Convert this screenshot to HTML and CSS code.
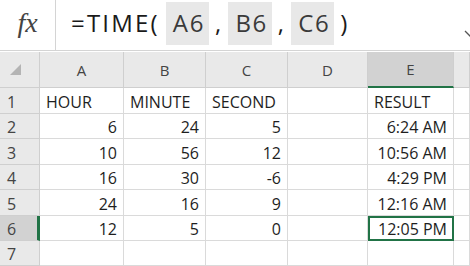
FILE: index.html
```html
<!DOCTYPE html>
<html lang="en">
<head>
    <meta charset="UTF-8">
    <title>TIME function</title>
    <link rel="stylesheet" href="styles.css">
</head>
<body>
    <div class="formula-bar">
        <div class="fx">fx</div>
        <div class="formula">
            <span>=TIME(</span>
            <span class="ref">A6</span>
            <span class="comma">,</span>
            <span class="ref">B6</span>
            <span class="comma">,</span>
            <span class="ref">C6</span>
            <span class="paren">)</span>
        </div>
        <div class="chevron">
            <svg width="12" height="8" viewBox="0 0 12 8"><path d="M1 1 L6 6 L11 1" fill="none" stroke="#555" stroke-width="1.3"/></svg>
        </div>
    </div>

    <div class="sheet">
        <div class="hd corner"><span class="tri"></span></div>
        <div class="hd col">A</div>
        <div class="hd col">B</div>
        <div class="hd col">C</div>
        <div class="hd col">D</div>
        <div class="hd col sel-col">E</div>
        <div class="hd col"></div>

        <div class="hd row">1</div>
        <div class="c">HOUR</div>
        <div class="c">MINUTE</div>
        <div class="c">SECOND</div>
        <div class="c"></div>
        <div class="c">RESULT</div>
        <div class="c"></div>

        <div class="hd row">2</div>
        <div class="c n">6</div>
        <div class="c n">24</div>
        <div class="c n">5</div>
        <div class="c"></div>
        <div class="c n">6:24 AM</div>
        <div class="c"></div>

        <div class="hd row">3</div>
        <div class="c n">10</div>
        <div class="c n">56</div>
        <div class="c n">12</div>
        <div class="c"></div>
        <div class="c n">10:56 AM</div>
        <div class="c"></div>

        <div class="hd row">4</div>
        <div class="c n">16</div>
        <div class="c n">30</div>
        <div class="c n">-6</div>
        <div class="c"></div>
        <div class="c n">4:29 PM</div>
        <div class="c"></div>

        <div class="hd row">5</div>
        <div class="c n">24</div>
        <div class="c n">16</div>
        <div class="c n">9</div>
        <div class="c"></div>
        <div class="c n">12:16 AM</div>
        <div class="c"></div>

        <div class="hd row sel-row">6</div>
        <div class="c n">12</div>
        <div class="c n">5</div>
        <div class="c n">0</div>
        <div class="c"></div>
        <div class="c n active">12:05 PM</div>
        <div class="c"></div>

        <div class="hd row">7</div>
        <div class="c"></div>
        <div class="c"></div>
        <div class="c"></div>
        <div class="c"></div>
        <div class="c"></div>
        <div class="c"></div>
    </div>
</body>
</html>
```

FILE: styles.css
```css
* {
    box-sizing: border-box;
}
body {
    margin: 0;
    width: 470px;
    height: 266px;
    overflow: hidden;
    background: #fff;
    font-family: "Open Sans", Arial, sans-serif;
    color: #222;
}
.formula-bar {
    display: flex;
    align-items: stretch;
    height: 51px;
    border-bottom: 1px solid #d4d4d4;
    margin-bottom: 1px;
}
.fx {
    width: 56px;
    border-right: 1px solid #d4d4d4;
    font-family: "Liberation Serif", serif;
    font-style: italic;
    font-size: 28px;
    color: #444;
    display: flex;
    align-items: center;
    justify-content: center;
    padding-bottom: 4px;
}
.formula {
    flex: 1;
    display: flex;
    align-items: stretch;
    padding: 2px 0 5px 15px;
    font-size: 24px;
    letter-spacing: 2.2px;
    line-height: 42px;
    color: #1a1a1a;
}
.ref {
    background: #e8e8e8;
    color: #3a3a3a;
    padding: 0 4px 0 7px;
    margin-left: 6px;
    letter-spacing: 1.6px;
}
.comma {
    padding: 0 5px 0 6px;
}
.comma + .ref {
    margin-left: 0;
}
.paren {
    padding-left: 6px;
}
.chevron {
    width: 6px;
    padding-top: 21px;
    overflow: hidden;
}
.sheet {
    display: grid;
    grid-template-columns: 40px 84px 82px 82px 80px 86px 1fr;
    grid-template-rows: 36px 26px 25px 26px 25px 26px 25px 25px;
    font-size: 16px;
}
.hd {
    background: #e9e9e9;
    color: #444;
    border-right: 1px solid #cfcfcf;
    border-bottom: 1px solid #cfcfcf;
    display: flex;
    align-items: center;
    font-size: 15px;
}
.col {
    justify-content: center;
}
.row {
    padding-left: 7px;
    padding-top: 2px;
    font-size: 16px;
}
.corner {
    position: relative;
}
.tri {
    position: absolute;
    left: 10px;
    top: 12px;
    width: 0;
    height: 0;
    border-left: 11px solid transparent;
    border-bottom: 11px solid #b4b4b4;
}
.sel-col {
    background: #d2d2d2;
    border-bottom: 2px solid #217346;
}
.sel-row {
    background: #d2d2d2;
    border-right: 3px solid #217346;
}
.c {
    border-right: 1px solid #dadada;
    border-bottom: 1px solid #dadada;
    padding: 2px 6px 0 6px;
    display: flex;
    align-items: center;
    white-space: nowrap;
    color: #1e1e1e;
}
.n {
    justify-content: flex-end;
}
.active {
    outline: 2px solid #217346;
    outline-offset: -2px;
    position: relative;
}
```
